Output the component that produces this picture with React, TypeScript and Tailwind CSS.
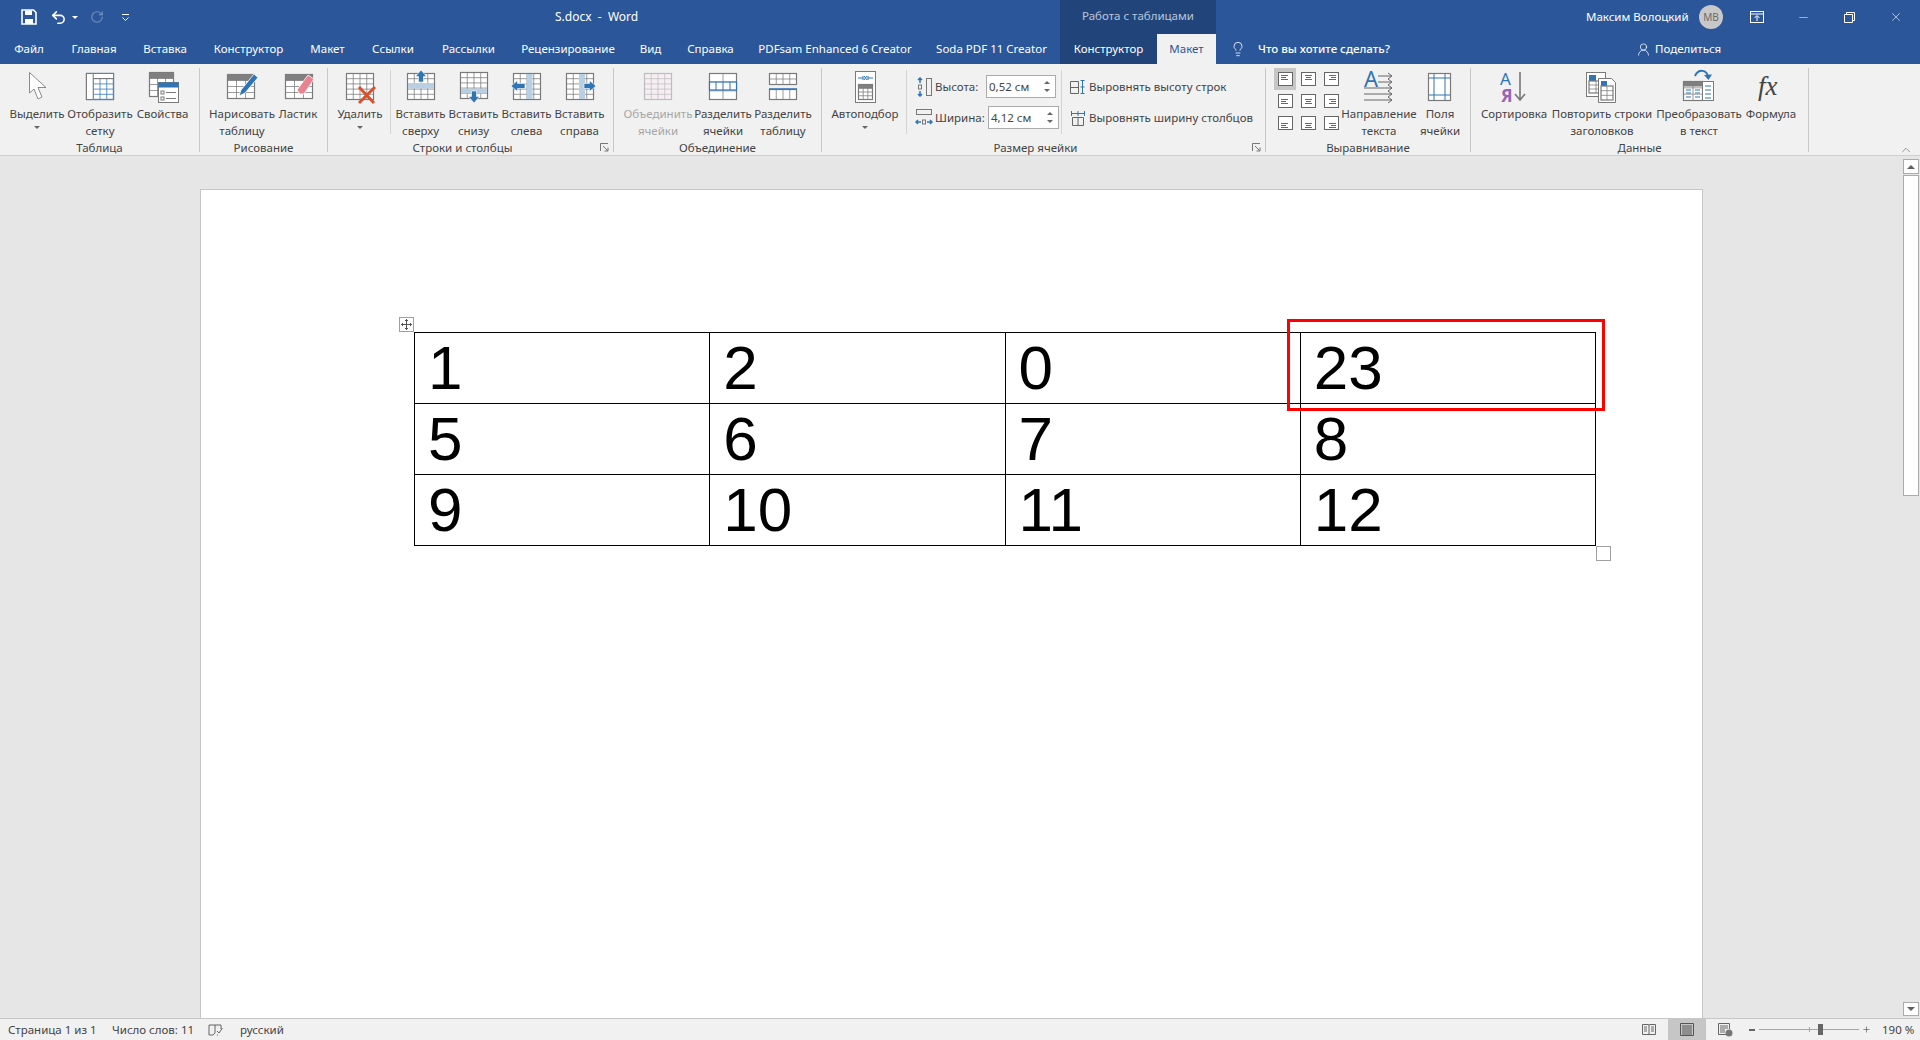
import { ReactNode } from 'react';
import { Lightbulb, Undo2, RotateCw, X, Minus, Plus, ChevronUp, UserRound } from 'lucide-react';

const GRAY = '#7a7a7a';
const BLUE = '#2f74b5';
const BAND = '#b9cfe4';

function Grid({ x, y, w, h, cols, rows, stroke = GRAY, fill = '#fff' }: { x: number; y: number; w: number; h: number; cols: number; rows: number; stroke?: string; fill?: string }) {
    const lines = [];
    for (let i = 1; i < cols; i++) {
        const p = x + (w * i) / cols;
        lines.push(<line key={`c${i}`} x1={p} x2={p} y1={y} y2={y + h} stroke={stroke} strokeOpacity="0.75" />);
    }
    for (let i = 1; i < rows; i++) {
        const p = y + (h * i) / rows;
        lines.push(<line key={`r${i}`} x1={x} x2={x + w} y1={p} y2={p} stroke={stroke} strokeOpacity="0.75" />);
    }
    return (
        <g>
            <rect x={x} y={y} width={w} height={h} fill={fill} stroke={stroke} strokeWidth="1.2" />
            {lines}
        </g>
    );
}

function Ico({ children, size = 32 }: { children: ReactNode; size?: number }) {
    return (
        <svg width={size} height={size} viewBox={`0 0 ${size} ${size}`} className="overflow-visible shrink-0">
            {children}
        </svg>
    );
}

const SelectIcon = () => (
    <Ico>
        <polygon points="8.5,3.5 8.5,24 13,20 17,30 21,28 17,18.5 25,18.5" fill="#fff" stroke="#8a8a8a" />
    </Ico>
);
const GridlinesIcon = () => (
    <Ico>
        <Grid x={2.5} y={4.5} w={27} h={26} cols={4} rows={5} stroke={BLUE} />
        <rect x={2.5} y={4.5} width={27} height={26} fill="none" stroke={GRAY} strokeWidth="1.2" />
        <rect x={2.5} y={4.5} width={27} height={5} fill="#fff" stroke={GRAY} />
        <rect x={2.5} y={4.5} width={6.7} height={26} fill="#fff" stroke={GRAY} />
    </Ico>
);
const PropertiesIcon = () => (
    <Ico>
        <Grid x={2.5} y={3.5} w={24} h={24} cols={3} rows={4} />
        <rect x={2.5} y={3.5} width={24} height={6} fill="#7f7f7f" />
        <rect x={11.5} y={13.5} width={20} height={20} fill="#fff" stroke={GRAY} />
        <rect x={11.5} y={13.5} width={20} height={5} fill={BLUE} />
        <rect x={14} y={22} width={3} height={3} fill="none" stroke={GRAY} />
        <rect x={14} y={28} width={3} height={3} fill="none" stroke={GRAY} />
        <line x1={19} x2={29} y1={23.5} y2={23.5} stroke={GRAY} />
        <line x1={19} x2={29} y1={29.5} y2={29.5} stroke={GRAY} />
    </Ico>
);
const DrawIcon = () => (
    <Ico>
        <Grid x={1.5} y={5.5} w={27} h={24} cols={3} rows={4} />
        <rect x={1.5} y={5.5} width={27} height={6} fill="#7f7f7f" />
        <path d="M13 27 L15 21 L28 5 L32 8.5 L19 24 Z" fill={BLUE} stroke="#fff" strokeWidth="0.8" />
    </Ico>
);
const EraserIcon = () => (
    <Ico>
        <Grid x={3.5} y={5.5} w={27} h={24} cols={3} rows={4} />
        <rect x={3.5} y={5.5} width={27} height={6} fill="#7f7f7f" />
        <path d="M15 21 L26 6 L32 10 L22 25 L18 25 Z" fill="#e8838f" stroke="#fff" strokeWidth="0.8" />
    </Ico>
);
const DeleteIcon = () => (
    <Ico>
        <Grid x={2.5} y={4.5} w={27} h={26} cols={4} rows={5} />
        <path d="M15 18 L30 34 M31 18 L15 34" stroke="#d9512c" strokeWidth="3" />
    </Ico>
);
const InsertAbove = () => (
    <Ico>
        <Grid x={2.5} y={4.5} w={27} h={26} cols={4} rows={5} />
        <rect x={3} y={14} width={26} height={5.5} fill={BAND} />
        <path d="M16 1 L21.5 7.5 L18.5 7.5 L18.5 13 L13.5 13 L13.5 7.5 L10.5 7.5 Z" fill={BLUE} stroke="#fff" strokeWidth="0.6" />
    </Ico>
);
const InsertBelow = () => (
    <Ico>
        <Grid x={2.5} y={3.5} w={27} h={26} cols={4} rows={5} />
        <rect x={3} y={19.5} width={26} height={5} fill={BAND} />
        <path d="M16 34 L21.5 27.5 L18.5 27.5 L18.5 22 L13.5 22 L13.5 27.5 L10.5 27.5 Z" fill={BLUE} stroke="#fff" strokeWidth="0.6" />
    </Ico>
);
const InsertLeft = () => (
    <Ico>
        <Grid x={2.5} y={4.5} w={27} h={26} cols={4} rows={5} />
        <rect x={15.5} y={5} width={6} height={25} fill={BAND} />
        <path d="M0 17 L6.5 11.5 L6.5 14.5 L14 14.5 L14 19.5 L6.5 19.5 L6.5 22.5 Z" fill={BLUE} stroke="#fff" strokeWidth="0.6" />
    </Ico>
);
const InsertRight = () => (
    <Ico>
        <Grid x={2.5} y={4.5} w={27} h={26} cols={4} rows={5} />
        <rect x={15} y={5} width={6} height={25} fill={BAND} />
        <path d="M32 17 L25.5 11.5 L25.5 14.5 L20 14.5 L20 19.5 L25.5 19.5 L25.5 22.5 Z" fill={BLUE} stroke="#fff" strokeWidth="0.6" />
    </Ico>
);
const MergeIcon = () => (
    <Ico>
        <Grid x={2.5} y={4.5} w={27} h={26} cols={4} rows={5} stroke="#bdbdbd" fill="#f6eef3" />
    </Ico>
);
const SplitCellsIcon = () => (
    <Ico>
        <Grid x={2.5} y={4.5} w={27} h={26} cols={2} rows={3} />
        <rect x={2.5} y={13} width={27} height={8} fill="#fff" stroke={BLUE} strokeWidth="1.2" />
        <line x1={9} x2={9} y1={13} y2={21} stroke={BLUE} />
        <line x1={16} x2={16} y1={13} y2={21} stroke={BLUE} />
        <line x1={23} x2={23} y1={13} y2={21} stroke={BLUE} />
    </Ico>
);
const SplitTableIcon = () => (
    <Ico>
        <Grid x={2.5} y={4.5} w={27} h={11} cols={4} rows={2} />
        <Grid x={2.5} y={20.5} w={27} h={10} cols={4} rows={1} />
        <line x1={2} x2={30} y1={20} y2={20} stroke={BLUE} strokeWidth="1.5" />
    </Ico>
);
const AutofitIcon = () => (
    <Ico>
        <rect x={6.5} y={2.5} width={20} height={31} fill="#fff" stroke={GRAY} />
        <path d="M9 9 H14 M19 9 H24 M14 7 V11 M19 7 V11 M15 7 L18 11 M18 7 L15 11" stroke={BLUE} fill="none" />
        <Grid x={9.5} y={15.5} w={14} h={15} cols={3} rows={4} />
        <rect x={9.5} y={15.5} width={14} height={4} fill="#7f7f7f" />
    </Ico>
);
const AlignCell = ({ row, col }: { row: number; col: number }) => {
    const top = [3, 5, 7][row];
    const widths = [7, 5, 7];
    return (
        <Ico size={15}>
            <rect x={0.5} y={0.5} width={14} height={13} fill="#fff" stroke="#666" />
            {widths.map((w, i) => {
                const x = col === 0 ? 3 : col === 1 ? 7.5 - w / 2 : 12 - w;
                return <line key={i} x1={x} x2={x + w} y1={top + i * 2 + 0.5} y2={top + i * 2 + 0.5} stroke={BLUE} />;
            })}
        </Ico>
    );
};
const DirectionIcon = () => (
    <Ico>
        <text x={1} y={18} fontSize="22" fill={BLUE} fontFamily="'Noto Sans', sans-serif">A</text>
        <path d="M15 7 H28 M15 13 H28 M1 19 H29 M1 25 H29 M1 31 H29 M25 4 L29 7 L25 10 M25 10 L29 13 L25 16 M25 16 L29 19 L25 22 M25 22 L29 25 L25 28 M25 28 L29 31 L25 34" stroke="#666" fill="none" />
    </Ico>
);
const MarginsIcon = () => (
    <Ico>
        <rect x={4.5} y={4.5} width={22} height={27} fill="#fff" stroke={GRAY} strokeWidth="1.2" />
        <path d="M10 5 V31 M21 5 V31 M5 9 H26 M5 26 H26" stroke={BLUE} />
    </Ico>
);
const SortIcon = () => (
    <Ico>
        <text x={2} y={16} fontSize="17" fill={BLUE} fontFamily="'Noto Sans', sans-serif">А</text>
        <text x={3} y={33} fontSize="17" fontWeight="700" fill="#9a62b3" fontFamily="'Noto Sans', sans-serif">Я</text>
        <path d="M22 3 V31 M17 25 L22 31 L27 25" stroke="#777" strokeWidth="1.6" fill="none" />
    </Ico>
);
const RepeatIcon = () => (
    <Ico>
        <rect x={0.5} y={3.5} width={19} height={24} fill="#fff" stroke={GRAY} />
        <rect x={3} y={6} width={7} height={6} fill={BLUE} />
        <Grid x={3} y={12} w={14} h={12} cols={2} rows={3} />
        <path d="M12.5 9.5 H25.5 L29.5 13.5 V33.5 H12.5 Z" fill="#fff" stroke={GRAY} />
        <rect x={15} y={12} width={6} height={5} fill={BLUE} />
        <Grid x={15} y={17} w={12} h={14} cols={2} rows={3} />
    </Ico>
);
const ConvertIcon = () => (
    <Ico>
        <path d="M12 7 C15 0 24 0 25 8" stroke={BLUE} strokeWidth="2" fill="none" />
        <path d="M21 6 L25.5 11 L29 5.5 Z" fill={BLUE} />
        <Grid x={0.5} y={12.5} w={19} h={19} cols={2} rows={3} />
        <rect x={0.5} y={12.5} width={19} height={5} fill="#7f7f7f" />
        <path d="M3 21 H8 M12 21 H17 M3 24 H8 M12 24 H17 M3 28 H8 M12 28 H17" stroke={BLUE} />
        <rect x={19.5} y={12.5} width={11} height={19} fill="#fff" stroke={GRAY} />
        <path d="M22 17 H28 M22 21 H28 M22 25 H28 M22 29 H28" stroke={BLUE} />
    </Ico>
);
const FxIcon = () => (
    <Ico>
        <text x={3} y={26} fontSize="27" fontStyle="italic" fill="#444" fontFamily="'Liberation Serif', serif">fx</text>
    </Ico>
);

function Btn({ w, icon, lines, caret, disabled }: { w: string; icon: ReactNode; lines: string[]; caret?: boolean; disabled?: boolean }) {
    return (
        <div className={`${w} shrink-0 flex flex-col items-center pt-[1px] whitespace-nowrap ${disabled ? 'text-[#a6a6a6]' : 'text-[#444]'}`}>
            <div className="h-[32px] w-[32px] mb-[4px]">{icon}</div>
            {lines.map((l) => (
                <div key={l} className="h-[17px] leading-[17px]">{l}</div>
            ))}
            {caret && <div className="mt-[4px] w-0 h-0 border-x-[3px] border-x-transparent border-t-[3px] border-t-[#666]" />}
        </div>
    );
}

function Group({ w, label, launcher, pl, children }: { w: string; label: string; launcher?: boolean; pl: string; children: ReactNode }) {
    return (
        <div className={`${w} shrink-0 h-[84px] border-r border-[#c8c8c8] flex flex-col`}>
            <div className={`h-[72px] flex ${pl}`}>{children}</div>
            <div className="h-[12px] leading-[16px] relative">
                <div className={`text-center text-[#444] ${launcher ? 'pr-[16px]' : ''}`}>{label}</div>
                {launcher && (
                    <svg width="9" height="9" viewBox="0 0 9 9" className="absolute right-[4px] top-[3px]">
                        <path d="M0.5 8 V0.5 H8 M3 3 L8 8 M8 4.5 V8 H4.5" stroke="#777" fill="none" />
                    </svg>
                )}
            </div>
        </div>
    );
}

function Spin({ value, w, ml }: { value: string; w: string; ml: string }) {
    return (
        <div className={`${w} ${ml} h-[23px] bg-white border border-[#ababab] flex items-center justify-between pl-[2px] pr-[5px] text-[#444]`}>
            <span>{value}</span>
            <span className="flex flex-col gap-[5px]">
                <span className="block w-0 h-0 border-x-[3px] border-x-transparent border-b-[3px] border-b-[#666]" />
                <span className="block w-0 h-0 border-x-[3px] border-x-transparent border-t-[3px] border-t-[#666]" />
            </span>
        </div>
    );
}

const tabs = [
    { t: 'Файл', w: 'w-[58px]' },
    { t: 'Главная', w: 'w-[72px]' },
    { t: 'Вставка', w: 'w-[70px]' },
    { t: 'Конструктор', w: 'w-[97px]' },
    { t: 'Макет', w: 'w-[61px]' },
    { t: 'Ссылки', w: 'w-[70px]' },
    { t: 'Рассылки', w: 'w-[81px]' },
    { t: 'Рецензирование', w: 'w-[118px]' },
    { t: 'Вид', w: 'w-[47px]' },
    { t: 'Справка', w: 'w-[73px]' },
    { t: 'PDFsam Enhanced 6 Creator', w: 'w-[176px]' },
    { t: 'Soda PDF 11 Creator', w: 'w-[137px]' },
];

const rows = [
    ['1', '2', '0', '23'],
    ['5', '6', '7', '8'],
    ['9', '10', '11', '12'],
];

export default function App() {
    return (
        <div className="w-[1920px] h-[1040px] flex flex-col overflow-hidden bg-[#e6e6e6] text-[11.5px] font-['Noto_Sans',sans-serif]">
            {/* title bar + tabs */}
            <div className="h-[64px] flex bg-[#2b579a] text-white shrink-0">
                <div className="w-[1060px] flex flex-col">
                    <div className="h-[34px] flex items-center relative">
                        <svg width="16" height="16" viewBox="0 0 16 16" className="ml-[21px]">
                            <path d="M1 1 H12.5 L15 3.5 V15 H1 Z" fill="none" stroke="#fff" strokeWidth="1.6" />
                            <rect x="4" y="1.5" width="7" height="4.5" fill="#fff" />
                            <rect x="4" y="10" width="8" height="5" fill="#fff" />
                        </svg>
                        <Undo2 size={17} strokeWidth={2.2} className="ml-[13px]" />
                        <span className="ml-[5px] w-0 h-0 border-x-[3px] border-x-transparent border-t-[3px] border-t-white" />
                        <RotateCw size={14} strokeWidth={2} className="ml-[12px] text-[#6f8fbd]" />
                        <svg width="9" height="9" viewBox="0 0 9 9" className="ml-[17px]">
                            <path d="M1 1.5 H8 M1.5 4.5 L4.5 7.5 L7.5 4.5" stroke="#fff" fill="none" />
                        </svg>
                        <div className="ml-[425px] whitespace-pre text-[12px]">S.docx  -  Word</div>
                    </div>
                    <div className="h-[30px] flex items-center">
                        {tabs.map((x) => (
                            <div key={x.t} className={`${x.w} shrink-0 text-center whitespace-nowrap`}>{x.t}</div>
                        ))}
                    </div>
                </div>
                <div className="w-[156px] shrink-0 bg-[#21457a] flex flex-col">
                    <div className="h-[34px] flex items-center justify-center text-[#b8c7de] pb-[2px]">Работа с таблицами</div>
                    <div className="h-[30px] flex">
                        <div className="w-[97px] flex items-center justify-center">Конструктор</div>
                        <div className="w-[59px] bg-[#f1f1f1] text-[#2b579a] flex items-center justify-center">Макет</div>
                    </div>
                </div>
                <div className="flex-1 flex flex-col">
                    <div className="h-[34px] flex items-center">
                        <div className="ml-[370px] whitespace-nowrap w-[114px]">Максим Волоцкий</div>
                        <div className="ml-[-1px] w-[24px] h-[24px] rounded-full bg-[#c8c8c8] text-[#6a6a6a] text-[10px] flex items-center justify-center">МВ</div>
                        <svg width="14" height="12" viewBox="0 0 14 12" className="ml-[27px]">
                            <rect x="0.5" y="0.5" width="13" height="11" fill="none" stroke="#fff" />
                            <path d="M0.5 3 H13.5 M7 10 V5 M4.5 7 L7 4.5 L9.5 7" stroke="#fff" fill="none" />
                        </svg>
                        <Minus size={13} strokeWidth={1} className="ml-[33px]" />
                        <svg width="11" height="11" viewBox="0 0 11 11" className="ml-[34px]">
                            <path d="M0.5 2.5 H8.5 V10.5 H0.5 Z M2.5 2.5 V0.5 H10.5 V8.5 H8.5" stroke="#fff" fill="none" />
                        </svg>
                        <X size={14} strokeWidth={1} className="ml-[34px]" />
                    </div>
                    <div className="h-[30px] flex items-center">
                        <Lightbulb size={16} strokeWidth={1.2} className="ml-[14px]" />
                        <div className="ml-[12px] w-[346px] font-medium whitespace-nowrap">Что вы хотите сделать?</div>
                        <UserRound size={15} strokeWidth={1.2} className="ml-[32px]" />
                        <div className="ml-[4px] whitespace-nowrap">Поделиться</div>
                    </div>
                </div>
            </div>

            {/* ribbon */}
            <div className="h-[92px] shrink-0 bg-[#f1f1f1] border-b border-[#cfcfcf] flex pt-[4px] relative">
                <Group w="w-[200px]" label="Таблица" pl="pl-[6px]">
                    <Btn w="w-[62px]" icon={<SelectIcon />} lines={['Выделить']} caret />
                    <Btn w="w-[64px]" icon={<GridlinesIcon />} lines={['Отобразить', 'сетку']} />
                    <Btn w="w-[61px]" icon={<PropertiesIcon />} lines={['Свойства']} />
                </Group>
                <Group w="w-[128px]" label="Рисование" pl="pl-[9px]">
                    <Btn w="w-[66px]" icon={<DrawIcon />} lines={['Нарисовать', 'таблицу']} />
                    <Btn w="w-[46px]" icon={<EraserIcon />} lines={['Ластик']} />
                </Group>
                <Group w="w-[286px]" label="Строки и столбцы" launcher pl="pl-[4px]">
                    <Btn w="w-[56px]" icon={<DeleteIcon />} lines={['Удалить']} caret />
                    <div className="w-[1px] h-[64px] ml-[2px] mr-[3px] mt-[2px] bg-[#d4d4d4]" />
                    <Btn w="w-[53px]" icon={<InsertAbove />} lines={['Вставить', 'сверху']} />
                    <Btn w="w-[53px]" icon={<InsertBelow />} lines={['Вставить', 'снизу']} />
                    <Btn w="w-[53px]" icon={<InsertLeft />} lines={['Вставить', 'слева']} />
                    <Btn w="w-[53px]" icon={<InsertRight />} lines={['Вставить', 'справа']} />
                </Group>
                <Group w="w-[208px]" label="Объединение" pl="pl-[9px]">
                    <Btn w="w-[70px]" icon={<MergeIcon />} lines={['Объединить', 'ячейки']} disabled />
                    <Btn w="w-[60px]" icon={<SplitCellsIcon />} lines={['Разделить', 'ячейки']} />
                    <Btn w="w-[60px]" icon={<SplitTableIcon />} lines={['Разделить', 'таблицу']} />
                </Group>
                <Group w="w-[444px]" label="Размер ячейки" launcher pl="pl-[8px]">
                    <Btn w="w-[70px]" icon={<AutofitIcon />} lines={['Автоподбор']} caret />
                    <div className="w-[1px] h-[64px] ml-[6px] mt-[2px] bg-[#d4d4d4]" />
                    <div className="w-[154px] flex flex-col text-[#444] shrink-0">
                        <div className="h-[23px] mt-[7px] flex items-center">
                            <svg width="18" height="20" viewBox="0 0 18 20" className="ml-[8px]">
                                <path d="M5 1 V6 M3 3 L5 1 L7 3 M5 14 V19 M3 17 L5 19 L7 17" stroke={BLUE} fill="none" strokeWidth="1.5" />
                                <rect x="3.5" y="8" width="3" height="4" fill="none" stroke="#777" />
                                <rect x="11.5" y="1.5" width="5" height="17" fill="none" stroke="#777" />
                            </svg>
                            <span className="ml-[2px] w-[48px] whitespace-nowrap">Высота:</span>
                            <Spin value="0,52 см" w="w-[70px]" ml="ml-[3px]" />
                        </div>
                        <div className="h-[23px] mt-[8px] flex items-center">
                            <svg width="18" height="20" viewBox="0 0 18 20" className="ml-[8px]">
                                <rect x="1.5" y="1.5" width="15" height="5" fill="none" stroke="#777" />
                                <path d="M1 14 H6 M3 12 L1 14 L3 16 M12 14 H17 M15 12 L17 14 L15 16" stroke={BLUE} fill="none" strokeWidth="1.5" />
                                <rect x="7.5" y="12" width="3" height="4" fill="none" stroke="#777" />
                            </svg>
                            <span className="ml-[2px] w-[50px] whitespace-nowrap">Ширина:</span>
                            <Spin value="4,12 см" w="w-[71px]" ml="ml-[3px]" />
                        </div>
                    </div>
                    <div className="w-[1px] h-[64px] mt-[2px] bg-[#d4d4d4]" />
                    <div className="flex flex-col pl-[8px] text-[#444] whitespace-nowrap">
                        <div className="h-[23px] mt-[7px] flex items-center gap-[3px]">
                            <svg width="16" height="16" viewBox="0 0 16 16">
                                <path d="M0.5 2.5 H8.5 V14.5 H0.5 Z M0.5 8.5 H8.5" stroke="#666" fill="none" />
                                <path d="M12.5 2 V14 M10.5 1.5 H14.5 M10.5 14.5 H14.5 M10.5 8 H14.5" stroke={BLUE} fill="none" />
                            </svg>
                            Выровнять высоту строк
                        </div>
                        <div className="h-[23px] mt-[8px] flex items-center gap-[3px]">
                            <svg width="16" height="16" viewBox="0 0 16 16">
                                <path d="M2.5 7.5 H13.5 V15.5 H2.5 Z M8 7.5 V15.5" stroke="#666" fill="none" />
                                <path d="M1.5 3.5 H14.5 M1.5 1 V6 M8 1 V6 M14.5 1 V6" stroke={BLUE} fill="none" />
                            </svg>
                            Выровнять ширину столбцов
                        </div>
                    </div>
                </Group>
                <Group w="w-[205px]" label="Выравнивание" pl="pl-[8px]">
                    <div className="w-[69px] shrink-0 grid grid-cols-3 grid-rows-3 h-[66px] relative">
                        {[0, 1, 2].flatMap((r) =>
                            [0, 1, 2].map((c) => (
                                <div key={`${r}${c}`} className={`flex items-center justify-center w-[22px] h-[22px] ${r === 0 && c === 0 ? 'bg-[#c6c6c6]' : ''}`}>
                                    <AlignCell row={r} col={c} />
                                </div>
                            ))
                        )}
                    </div>
                    <Btn w="w-[72px]" icon={<DirectionIcon />} lines={['Направление', 'текста']} />
                    <Btn w="w-[50px]" icon={<MarginsIcon />} lines={['Поля', 'ячейки']} />
                </Group>
                <Group w="w-[338px]" label="Данные" pl="pl-[6px]">
                    <Btn w="w-[74px]" icon={<SortIcon />} lines={['Сортировка']} />
                    <Btn w="w-[102px]" icon={<RepeatIcon />} lines={['Повторить строки', 'заголовков']} />
                    <Btn w="w-[92px]" icon={<ConvertIcon />} lines={['Преобразовать', 'в текст']} />
                    <Btn w="w-[52px]" icon={<FxIcon />} lines={['Формула']} />
                </Group>
                <ChevronUp size={14} strokeWidth={1} className="absolute right-[7px] top-[79px] text-[#555]" />
            </div>

            {/* document area */}
            <div className="flex-1 flex min-h-0">
                <div className="flex-1 min-w-0 overflow-hidden pl-[200px] pt-[33px]">
                    <div className="relative w-[1503px] h-[900px] bg-white border border-[#c6c6c6] pl-[213px] pt-[142px]">
                        <table className="w-[1182px] table-fixed border-collapse font-['Liberation_Sans',Arial,sans-serif] text-[62px] text-black">
                            <tbody>
                                {rows.map((r) => (
                                    <tr key={r[0]} className="h-[71px]">
                                        {r.map((c) => (
                                            <td key={c} className="border border-black pl-[13px] leading-[70px] align-top">{c}</td>
                                        ))}
                                    </tr>
                                ))}
                            </tbody>
                        </table>
                        <div className="absolute left-[198px] top-[127px] w-[15px] h-[15px] border border-[#a0a0a0] bg-white flex items-center justify-center">
                            <svg width="11" height="11" viewBox="0 0 11 11">
                                <path d="M5.5 0 V11 M0 5.5 H11 M4 1.5 H7 M4 9.5 H7 M1.5 4 V7 M9.5 4 V7" stroke="#555" fill="none" />
                            </svg>
                        </div>
                        <div className="absolute left-[1395px] top-[356px] w-[15px] h-[15px] border border-[#a0a0a0] bg-white" />
                        <div className="absolute left-[1086px] top-[129px] w-[318px] h-[92px] border-[3px] border-[#ff0000]" />
                    </div>
                </div>
                <div className="w-[17px] shrink-0 flex flex-col pt-[3px] pb-[2px] pr-[1px]">
                    <div className="h-[15px] bg-white border border-[#ababab] flex items-center justify-center">
                        <span className="w-0 h-0 border-x-[4px] border-x-transparent border-b-[4px] border-b-[#606060]" />
                    </div>
                    <div className="h-[321px] mt-[1px] bg-white border border-[#ababab]" />
                    <div className="flex-1" />
                    <div className="h-[14px] bg-white border border-[#ababab] flex items-center justify-center">
                        <span className="w-0 h-0 border-x-[4px] border-x-transparent border-t-[4px] border-t-[#606060]" />
                    </div>
                </div>
            </div>

            {/* status bar */}
            <div className="h-[22px] shrink-0 bg-[#f1f1f1] border-t border-[#c6c6c6] flex items-center text-[#444] whitespace-nowrap">
                <div className="ml-[8px] w-[104px]">Страница 1 из 1</div>
                <div className="w-[96px]">Число слов: 11</div>
                <svg width="15" height="13" viewBox="0 0 15 13">
                    <path d="M7 2 H1 V12 H5 L7 10 V2 M7 2 H13 V6 M9 12 H10 M9 8 L11 10 L14.5 5" stroke="#666" fill="none" />
                </svg>
                <div className="ml-[17px]">русский</div>
                <div className="flex-1" />
                <svg width="14" height="13" viewBox="0 0 14 13">
                    <path d="M7 2 V12 M0.5 1.5 H6 L7 2 L8 1.5 H13.5 V11.5 H0.5 Z M2 4 H5 M2 6 H5 M2 8 H5 M9 4 H12 M9 6 H12 M9 8 H12" stroke="#666" fill="none" />
                </svg>
                <div className="ml-[12px] w-[38px] h-[21px] bg-[#c6c6c6] flex items-center justify-center">
                    <svg width="14" height="13" viewBox="0 0 14 13">
                        <path d="M0.5 0.5 H13.5 V12.5 H0.5 Z M2 3 H12 M2 5 H12 M2 7 H12 M2 9 H12 M2 11 H12" stroke="#555" fill="none" />
                    </svg>
                </div>
                <svg width="15" height="14" viewBox="0 0 15 14" className="ml-[12px]">
                    <path d="M9 11.5 H0.5 V0.5 H11.5 V6 M2 3 H10 M2 5 H10 M2 7 H7 M2 9 H7" stroke="#666" fill="none" />
                    <circle cx="11" cy="10" r="3.5" fill="#777" />
                </svg>
                <div className="ml-[16px] w-[6px] h-[2px] bg-[#666]" />
                <div className="ml-[4px] w-[100px] h-[1px] bg-[#a6a6a6] relative">
                    <div className="absolute left-[50px] top-[-2px] w-[1px] h-[5px] bg-[#a6a6a6]" />
                    <div className="absolute left-[59px] top-[-5px] w-[5px] h-[11px] bg-[#666]" />
                </div>
                <Plus size={9} strokeWidth={2} className="ml-[3px] text-[#666]" />
                <div className="ml-[11px] mr-[10px] w-[28px]">190 %</div>
            </div>
        </div>
    );
}
